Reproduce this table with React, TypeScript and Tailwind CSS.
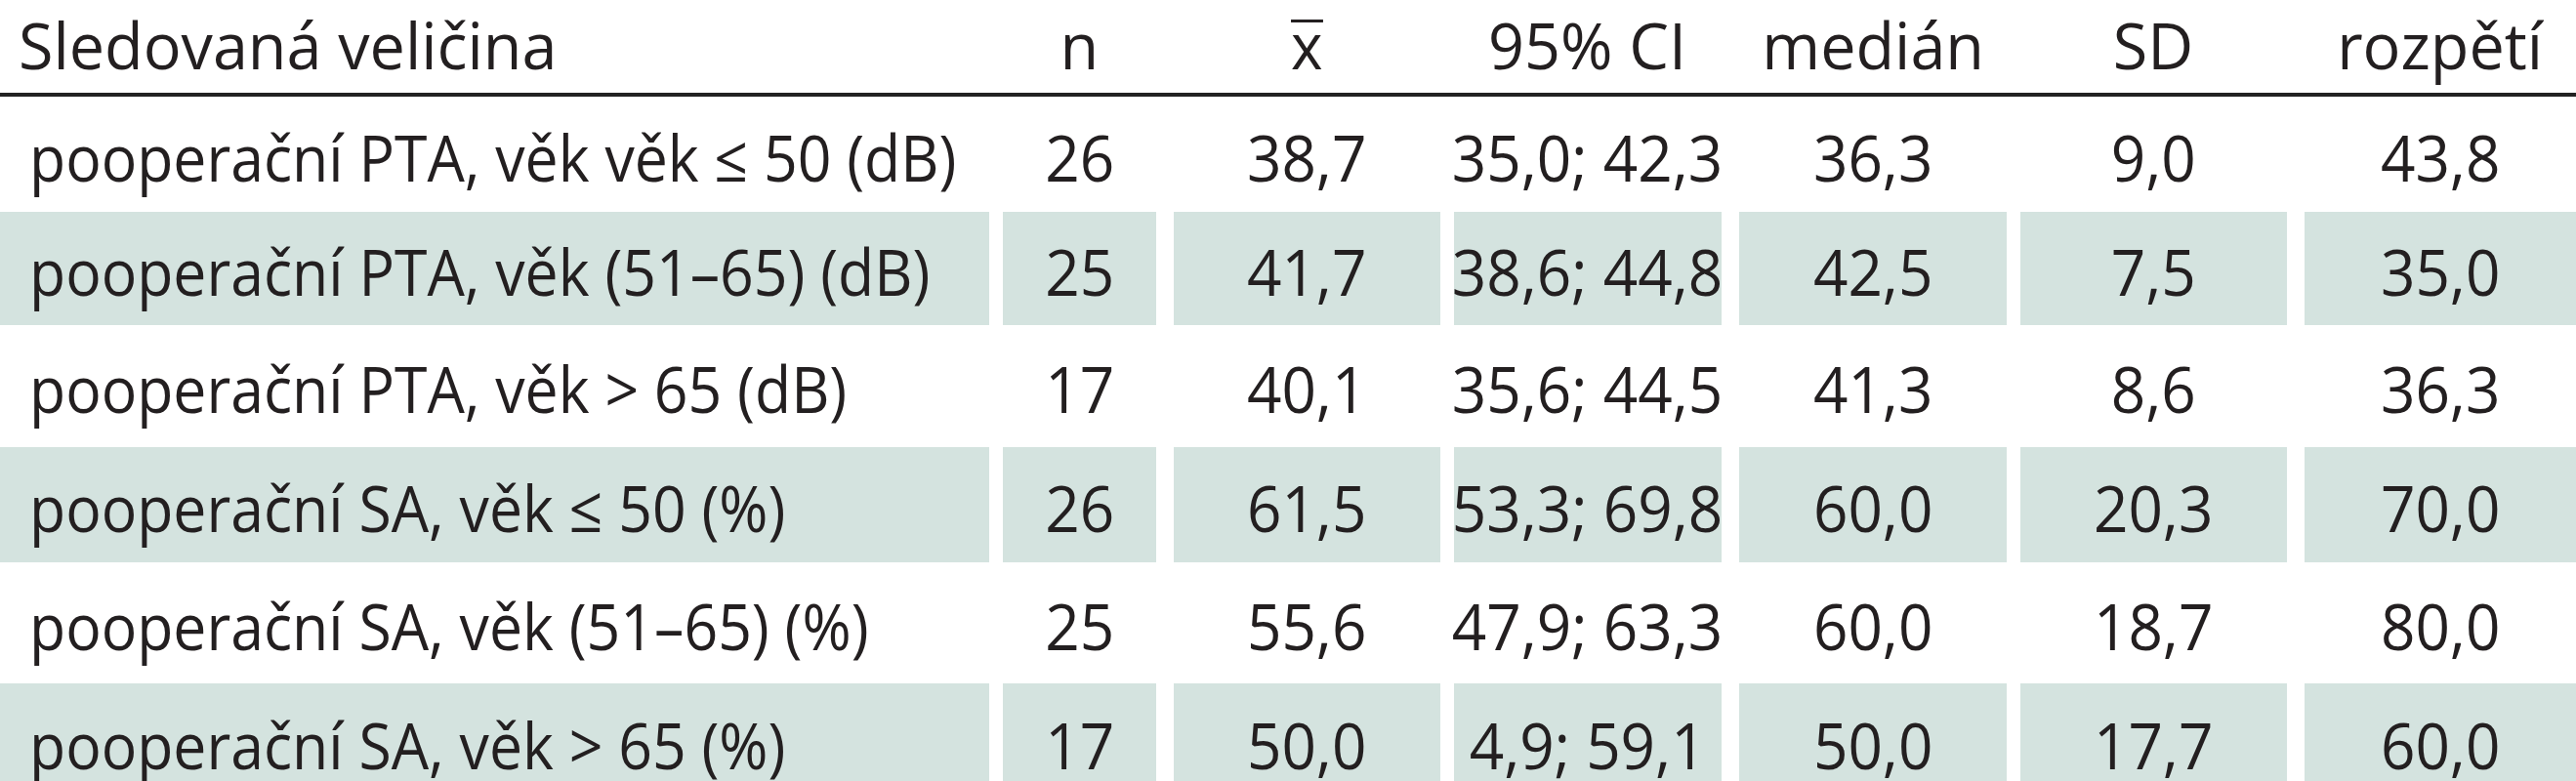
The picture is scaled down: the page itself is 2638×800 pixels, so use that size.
import React from "react";

const cellCls = [
  "w-[1013px] shrink-0 justify-start pl-[30px]",
  "w-[157px] ml-[14px] shrink-0 justify-center",
  "w-[273px] ml-[18px] shrink-0 justify-center",
  "w-[274px] ml-[14px] shrink-0 justify-center",
  "w-[274px] ml-[18px] shrink-0 justify-center",
  "w-[273px] ml-[14px] shrink-0 justify-center",
  "w-[278px] ml-[18px] shrink-0 justify-center",
];

const rowH = ["h-[118px]", "h-[116px]", "h-[125px]", "h-[118px]", "h-[124px]", "h-[120px]"];

const rows: string[][] = [
  ["pooperační PTA, věk věk ≤ 50 (dB)", "26", "38,7", "35,0; 42,3", "36,3", "9,0", "43,8"],
  ["pooperační PTA, věk (51–65) (dB)", "25", "41,7", "38,6; 44,8", "42,5", "7,5", "35,0"],
  ["pooperační PTA, věk > 65 (dB)", "17", "40,1", "35,6; 44,5", "41,3", "8,6", "36,3"],
  ["pooperační SA, věk ≤ 50 (%)", "26", "61,5", "53,3; 69,8", "60,0", "20,3", "70,0"],
  ["pooperační SA, věk (51–65) (%)", "25", "55,6", "47,9; 63,3", "60,0", "18,7", "80,0"],
  ["pooperační SA, věk > 65 (%)", "17", "50,0", "4,9; 59,1", "50,0", "17,7", "60,0"],
];

function Cell({ i, gray, children }: { i: number; gray: boolean; children: React.ReactNode }) {
  return (
    <div className={`${cellCls[i]} flex items-center pt-[3px] ${gray ? "bg-[#d4e3df]" : ""}`}>
      {i === 0 ? (
        <span className="inline-block whitespace-nowrap leading-[66px] scale-x-[0.92] origin-left">{children}</span>
      ) : (
        <span className="inline-block whitespace-nowrap leading-[66px] scale-x-[0.94] origin-center">{children}</span>
      )}
    </div>
  );
}

function H({ left, children }: { left?: boolean; children: React.ReactNode }) {
  return (
    <span
      className={`inline-block whitespace-nowrap leading-[66px] scale-x-[0.98] ${left ? "origin-left" : "origin-center"}`}
    >
      {children}
    </span>
  );
}

export default function App() {
  return (
    <div
      className="w-[2638px] bg-white text-[#231f20] text-[66px] font-normal overflow-hidden"
      style={{ fontFamily: '"Open Sans", "Noto Sans", sans-serif' }}
    >
      <div className="flex h-[95px] pb-[6px]">
        <div className="w-[1013px] shrink-0 flex items-center pl-[19px]">
          <H left>Sledovaná veličina</H>
        </div>
        <div className="w-[157px] ml-[14px] shrink-0 flex items-center justify-center">
          <H>n</H>
        </div>
        <div className="w-[273px] ml-[18px] shrink-0 flex items-center justify-center">
          <span className="relative inline-block leading-[66px] scale-x-[0.94] origin-center">
            x
            <span className="absolute left-0 right-0 top-[8px] h-[3px] bg-[#231f20]" />
          </span>
        </div>
        <div className="w-[274px] ml-[14px] shrink-0 flex items-center justify-center">
          <H>95% CI</H>
        </div>
        <div className="w-[274px] ml-[18px] shrink-0 flex items-center justify-center">
          <H>medián</H>
        </div>
        <div className="w-[273px] ml-[14px] shrink-0 flex items-center justify-center">
          <H>SD</H>
        </div>
        <div className="w-[278px] ml-[18px] shrink-0 flex items-center justify-center">
          <H>rozpětí</H>
        </div>
      </div>
      <div className="h-[4px] bg-[#222222]" />
      {rows.map((r, ri) => (
        <div key={ri} className={`flex ${rowH[ri]}`}>
          {r.map((c, ci) => (
            <Cell key={ci} i={ci} gray={ri % 2 === 1}>
              {c}
            </Cell>
          ))}
        </div>
      ))}
    </div>
  );
}
